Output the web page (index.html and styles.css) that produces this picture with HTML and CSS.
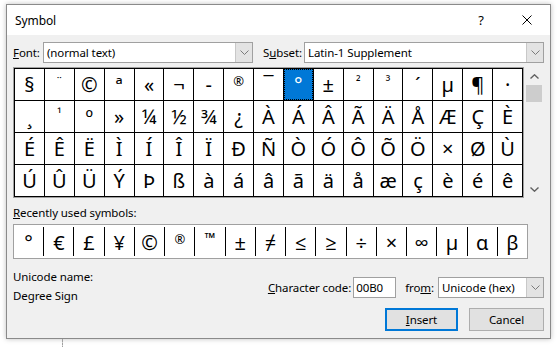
FILE: index.html
```html
<!DOCTYPE html>
<html lang="en">
<head>
    <meta charset="UTF-8">
    <title>Symbol</title>
    <link rel="stylesheet" href="styles.css">
</head>
<body>
<div class="desktop">
    <div class="dialog">
        <!-- Title bar -->
        <div class="titlebar">
            <span class="title">Symbol</span>
            <span class="tb-btn">?</span>
            <span class="tb-btn">
                <svg width="10" height="10" viewBox="0 0 10 10"><path d="M0.5 0.5 L9.5 9.5 M9.5 0.5 L0.5 9.5" stroke="#000" stroke-width="1" fill="none"/></svg>
            </span>
        </div>

        <div class="content">
            <!-- Font / Subset -->
            <div class="pickers">
                <label class="font-label"><u>F</u>ont:</label>
                <div class="combo font-combo">
                    <span class="combo-text">(normal text)</span>
                    <span class="combo-btn"><svg width="9" height="5" viewBox="0 0 9 5"><path d="M0.5 0.5 L4.5 4.5 L8.5 0.5" stroke="#7a7a7a" fill="none"/></svg></span>
                </div>
                <label class="subset-label">S<u>u</u>bset:</label>
                <div class="combo subset-combo">
                    <span class="combo-text">Latin-1 Supplement</span>
                    <span class="combo-btn"><svg width="9" height="5" viewBox="0 0 9 5"><path d="M0.5 0.5 L4.5 4.5 L8.5 0.5" stroke="#7a7a7a" fill="none"/></svg></span>
                </div>
            </div>

            <!-- Character grid -->
            <div class="grid-row">
                <div class="grid-frame">
                    <div class="chars">
                        <span class="cell">§</span><span class="cell small">¨</span><span class="cell">©</span><span class="cell">ª</span><span class="cell">«</span><span class="cell">¬</span><span class="cell">-</span><span class="cell small">®</span><span class="cell">¯</span><span class="cell selected">°</span><span class="cell">±</span><span class="cell small">²</span><span class="cell small">³</span><span class="cell">´</span><span class="cell">µ</span><span class="cell">¶</span><span class="cell">·</span>
                        <span class="cell">¸</span><span class="cell small">¹</span><span class="cell">º</span><span class="cell">»</span><span class="cell">¼</span><span class="cell">½</span><span class="cell">¾</span><span class="cell">¿</span><span class="cell">À</span><span class="cell">Á</span><span class="cell">Â</span><span class="cell">Ã</span><span class="cell">Ä</span><span class="cell">Å</span><span class="cell">Æ</span><span class="cell">Ç</span><span class="cell">È</span>
                        <span class="cell">É</span><span class="cell">Ê</span><span class="cell">Ë</span><span class="cell">Ì</span><span class="cell">Í</span><span class="cell">Î</span><span class="cell">Ï</span><span class="cell">Ð</span><span class="cell">Ñ</span><span class="cell">Ò</span><span class="cell">Ó</span><span class="cell">Ô</span><span class="cell">Õ</span><span class="cell">Ö</span><span class="cell">×</span><span class="cell">Ø</span><span class="cell">Ù</span>
                        <span class="cell">Ú</span><span class="cell">Û</span><span class="cell">Ü</span><span class="cell">Ý</span><span class="cell">Þ</span><span class="cell">ß</span><span class="cell">à</span><span class="cell">á</span><span class="cell">â</span><span class="cell">ã</span><span class="cell">ä</span><span class="cell">å</span><span class="cell">æ</span><span class="cell">ç</span><span class="cell">è</span><span class="cell">é</span><span class="cell">ê</span>
                    </div>
                </div>
                <div class="scrollbar">
                    <span class="sb-btn"><svg width="9" height="5" viewBox="0 0 9 5"><path d="M0.5 4.5 L4.5 0.8 L8.5 4.5" stroke="#606060" stroke-width="1.4" fill="none"/></svg></span>
                    <span class="sb-thumb"></span>
                    <span class="sb-track"></span>
                    <span class="sb-btn"><svg width="9" height="5" viewBox="0 0 9 5"><path d="M0.5 0.5 L4.5 4.2 L8.5 0.5" stroke="#606060" stroke-width="1.4" fill="none"/></svg></span>
                </div>
            </div>

            <!-- Recently used -->
            <div class="recent-label"><u>R</u>ecently used symbols:</div>
            <div class="recent">
                <span class="rcell">°</span><span class="rcell">€</span><span class="rcell">£</span><span class="rcell">¥</span><span class="rcell">©</span><span class="rcell small">®</span><span class="rcell tm">™</span><span class="rcell">±</span><span class="rcell">≠</span><span class="rcell">≤</span><span class="rcell">≥</span><span class="rcell">÷</span><span class="rcell">×</span><span class="rcell">∞</span><span class="rcell">µ</span><span class="rcell">α</span><span class="rcell">β</span>
            </div>

            <!-- Bottom area -->
            <div class="bottom">
                <div class="name-info">
                    <div>Unicode name:</div>
                    <div>Degree Sign</div>
                </div>
                <div class="actions">
                    <div class="code-row">
                        <label class="code-label"><u>C</u>haracter code:</label>
                        <div class="code-input">00B0</div>
                        <label class="from-label">fro<u>m</u>:</label>
                        <div class="combo from-combo">
                            <span class="combo-text">Unicode (hex)</span>
                            <span class="combo-btn"><svg width="9" height="5" viewBox="0 0 9 5"><path d="M0.5 0.5 L4.5 4.5 L8.5 0.5" stroke="#7a7a7a" fill="none"/></svg></span>
                        </div>
                    </div>
                    <div class="buttons">
                        <button class="btn btn-default"><u>I</u>nsert</button>
                        <button class="btn">Cancel</button>
                    </div>
                </div>
            </div>
        </div>
    </div>
    <div class="guide"></div>
</div>
</body>
</html>
```

FILE: styles.css
```css
body {
    margin: 0;
    background-color: #ffffff;
    font-family: "Noto Sans", "Open Sans", sans-serif;
    font-size: 11.5px;
    letter-spacing: -0.1px;
    color: #000;
}
.desktop {
    width: 559px;
    height: 347px;
    overflow: hidden;
    padding-top: 4px;
    box-sizing: border-box;
}
.dialog {
    margin-left: 6px;
    width: 545px;
    height: 335px;
    box-sizing: border-box;
    border: 1px solid #8a8a8a;
    background-color: #f0f0f0;
    box-shadow: 0 0 5px rgba(0, 0, 0, 0.25);
    display: flex;
    flex-direction: column;
}
.guide {
    margin-left: 62px;
    height: 10px;
    border-left: 1px dashed #a0a0a0;
}

/* title bar */
.titlebar {
    height: 30px;
    background-color: #ffffff;
    display: flex;
    align-items: center;
}
.title {
    flex: 1;
    padding-left: 8px;
    font-size: 12px;
}
.tb-btn {
    width: 46px;
    height: 30px;
    display: flex;
    align-items: center;
    justify-content: center;
    font-size: 13px;
}

.content {
    padding: 7px 6px 0 6px;
    display: flex;
    flex-direction: column;
}

/* font/subset pickers */
.pickers {
    display: flex;
    align-items: center;
    height: 21px;
}
.font-label {
    width: 30px;
}
.subset-label {
    width: 41px;
    margin-left: 10px;
}
.combo {
    height: 21px;
    box-sizing: border-box;
    border: 1px solid #a0a0a0;
    background-color: #ffffff;
    display: flex;
    align-items: center;
}
.font-combo {
    width: 210px;
}
.subset-combo {
    flex: 1;
}
.combo-text {
    flex: 1;
    padding-left: 3px;
    white-space: nowrap;
}
.combo-btn {
    width: 16px;
    height: 19px;
    background-color: #e3e3e3;
    border-left: 1px solid #c8c8c8;
    display: flex;
    align-items: center;
    justify-content: center;
}

/* grid */
.grid-row {
    display: flex;
    margin-top: 4px;
}
.grid-frame {
    width: 512px;
    box-sizing: border-box;
    border: 1px solid #a0a0a0;
}
.chars {
    display: grid;
    grid-template-columns: repeat(17, 1fr);
    grid-auto-rows: 31px;
    gap: 1px;
    background-color: #000;
    border: 1px solid #000;
}
.cell {
    background-color: #ffffff;
    text-align: center;
    font-size: 20px;
    line-height: 31px;
    letter-spacing: 0;
}
.cell.small, .rcell.small {
    font-size: 13px;
    line-height: 24px;
}
.cell.selected {
    background-color: #0078d7;
    color: #ffffff;
    outline: 1px dotted #000;
    outline-offset: -1px;
}
.scrollbar {
    width: 19px;
    margin-left: 1px;
    display: flex;
    flex-direction: column;
}
.sb-btn {
    height: 18px;
    display: flex;
    align-items: center;
    justify-content: center;
}
.sb-thumb {
    height: 17px;
    margin: 0 2px 0 1px;
    background-color: #cdcdcd;
}
.sb-track {
    flex: 1;
}

/* recently used */
.recent-label {
    margin-top: 7px;
    height: 16px;
    line-height: 16px;
}
.recent {
    margin-top: 3px;
    width: 515px;
    height: 35px;
    box-sizing: border-box;
    border: 1px solid #a0a0a0;
    background-color: #ffffff;
    padding: 2px 0;
    display: flex;
}
.rcell {
    flex: 1;
    text-align: center;
    font-size: 20px;
    line-height: 31px;
    letter-spacing: 0;
    border-left: 1px solid #000;
}
.rcell:first-child {
    border-left: none;
}
.rcell.tm {
    font-size: 14px;
    line-height: 22px;
}

/* bottom */
.bottom {
    margin-top: 8px;
    display: flex;
    justify-content: space-between;
}
.name-info {
    line-height: 19px;
}
.actions {
    padding-top: 10px;
    display: flex;
    flex-direction: column;
    align-items: flex-end;
}
.code-row {
    display: flex;
    align-items: center;
    height: 21px;
}
.code-label {
    margin-right: 2px;
}
.code-input {
    width: 43px;
    height: 21px;
    box-sizing: border-box;
    border: 1px solid #a0a0a0;
    background-color: #ffffff;
    padding-left: 2px;
    line-height: 19px;
}
.from-label {
    margin-left: 9px;
    margin-right: 4px;
}
.from-combo {
    width: 106px;
}
.buttons {
    margin-top: 10px;
    display: flex;
    gap: 11px;
}
.btn {
    height: 23px;
    width: 75px;
    font-family: "Noto Sans", "Open Sans", sans-serif;
    font-size: 11.5px;
    letter-spacing: -0.1px;
    background-color: #e1e1e1;
    border: 1px solid #adadad;
    padding: 0;
}
.btn-default {
    width: 73px;
    border: 2px solid #0078d7;
}
```
